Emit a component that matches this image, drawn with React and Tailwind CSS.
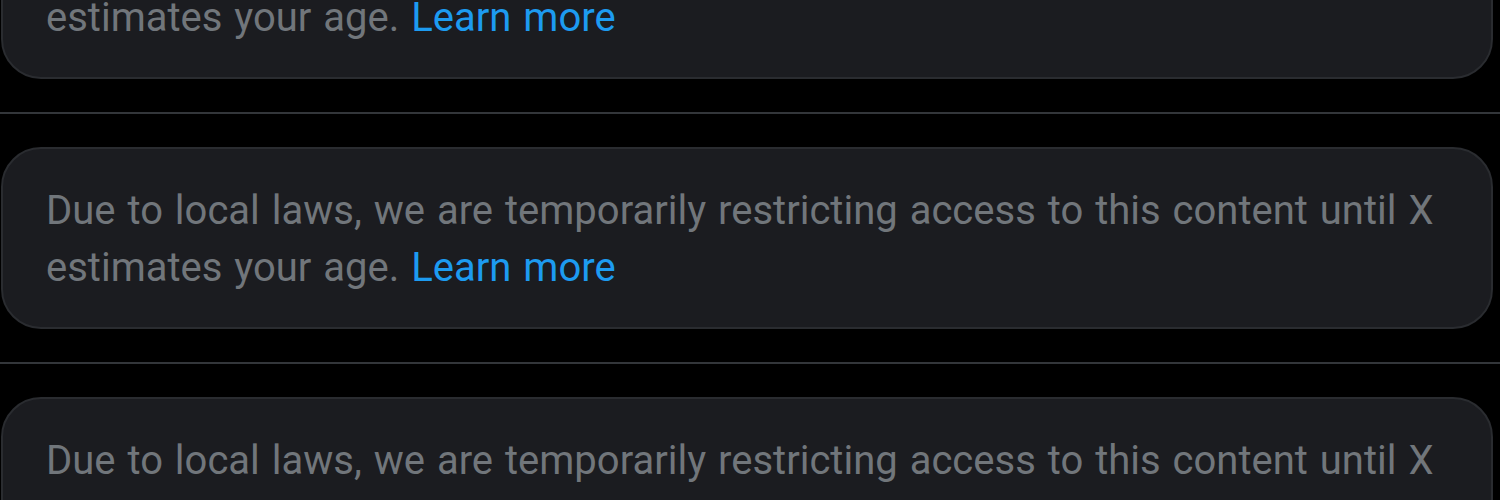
const NOTICE = 'Due to local laws, we are temporarily restricting access to this content until X estimates your age.';

function RestrictedNotice() {
  return (
    <div className="rounded-[40px] border-2 border-[#2a2c30] bg-[#1b1c20] pl-[43px] pr-[40px] pt-[33px] pb-[31px]">
      <p className="text-[40px] leading-[57px] text-[#71767b] [word-spacing:2px]">
        {NOTICE} <a className="text-[#1d9bf0]">Learn more</a>
      </p>
    </div>
  );
}

export default function App() {
  const items = [1, 2, 3];
  return (
    <div className="h-[500px] w-[1500px] overflow-hidden bg-black" style={{ fontFamily: 'Roboto, "Noto Sans", sans-serif' }}>
      <div className="-mt-[136px]">
        {items.map(id => (
          <div key={id} className="border-b-2 border-[#33363a] py-[33px]">
            <div className="ml-[1px] mr-[7px]">
              <RestrictedNotice />
            </div>
          </div>
        ))}
      </div>
    </div>
  );
}
